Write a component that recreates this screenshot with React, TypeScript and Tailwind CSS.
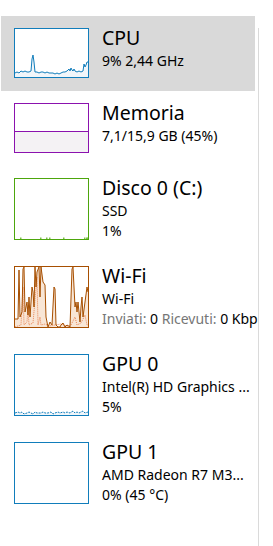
import type { ReactNode } from 'react';

type Row = {
  title: string;
  lines: ReactNode[];
  color: string;
  tall: boolean;
  graph: ReactNode;
  selected?: boolean;
};

const cpuPts =
  '0,44 2,43 4,44 6,42 8,43 10,42 12,43 14,43 16,42 17,30 18,26 19,33 20,43 22,43 24,44 26,43 28,43 30,44 32,43 34,44 36,44 38,44 40,45 42,44 44,45 46,44 48,43 50,43 52,42 54,40 55,42 56,39 57,41 58,42 59,40 60,42 62,43 64,42 66,43 68,42 69,35 70,38 71,36 72,33 73,33';

const wifiPts =
  '0,52 3,52 4,3 5,50 7,45 8,2 9,0 10,45 12,35 13,48 14,30 15,50 17,20 18,25 19,40 20,0 21,20 22,5 24,0 25,30 26,0 28,15 30,18 31,50 33,60 35,55 37,58 39,20 40,22 41,58 43,60 45,60 46,58 48,56 50,60 52,58 55,60 57,2 58,0 59,20 60,40 61,35 62,45 63,35 65,55 66,40 67,30 68,50 70,35 72,20 73,25';

const wifiDots =
  '0,60 6,58 8,20 9,58 12,55 13,40 14,58 18,56 22,10 23,58 25,50 26,58 30,57 34,59 40,58 46,57 52,59 56,58 60,50 62,58 66,56 70,48 72,58 73,58';

function CpuGraph() {
  return (
    <svg viewBox="0 0 73 48" preserveAspectRatio="none" className="h-full w-full">
      <polygon points={`0,48 ${cpuPts} 73,48`} fill="#f1f6fa" />
      <polyline points={cpuPts} fill="none" stroke="#117dbb" strokeWidth="1" />
    </svg>
  );
}

function MemGraph() {
  return (
    <div className="flex h-full w-full flex-col">
      <div className="flex-1" />
      <div className="h-[21px] border-t border-[#8b12ae] bg-[#f4f2f4]" />
    </div>
  );
}

function DiskGraph() {
  const xs = [6, 26, 32, 35, 49, 70, 72, 73];
  return (
    <svg viewBox="0 0 73 60" preserveAspectRatio="none" className="h-full w-full">
      {xs.map((x) => (
        <rect key={x} x={x - 1} y={58.5} width={1.5} height={1.5} fill="#7cc04a" />
      ))}
    </svg>
  );
}

function WifiGraph() {
  return (
    <svg viewBox="0 0 73 60" preserveAspectRatio="none" className="h-full w-full">
      <polygon points={`0,60 ${wifiPts} 73,60`} fill="#f8e6d6" />
      <polyline points={wifiDots} fill="none" stroke="#e36c33" strokeWidth="0.8" strokeDasharray="1 1" />
      <polyline points={wifiPts} fill="none" stroke="#a74f01" strokeWidth="1" />
    </svg>
  );
}

function GpuGraph({ noise }: { noise: boolean }) {
  if (!noise) return null;
  const pts =
    '0,58 3,57 5,58 7,57 9,59 12,58 14,57 16,58 18,59 20,57 22,58 26,58 28,57 30,58 33,58 36,57 38,59 40,58 43,57 45,58 48,57 50,58 52,57 55,58 58,56 60,58 62,57 64,58 66,57 68,56 70,58 73,57';
  return (
    <svg viewBox="0 0 73 60" preserveAspectRatio="none" className="h-full w-full">
      <polygon points={`0,60 ${pts} 73,60`} fill="#f1f6fa" />
      <polyline points={pts} fill="none" stroke="#117dbb" strokeWidth="1" strokeDasharray="2 1" />
    </svg>
  );
}

const rows: Row[] = [
  {
    title: 'CPU',
    lines: ['9% 2,44 GHz'],
    color: 'border-[#117dbb]',
    tall: false,
    graph: <CpuGraph />,
    selected: true,
  },
  {
    title: 'Memoria',
    lines: ['7,1/15,9 GB (45%)'],
    color: 'border-[#8b12ae]',
    tall: false,
    graph: <MemGraph />,
  },
  {
    title: 'Disco 0 (C:)',
    lines: ['SSD', '1%'],
    color: 'border-[#4da60c]',
    tall: true,
    graph: <DiskGraph />,
  },
  {
    title: 'Wi-Fi',
    lines: [
      'Wi-Fi',
      <>
        <span className="text-[#767676]">Inviati: </span>0{' '}
        <span className="text-[#767676]">Ricevuti: </span>0 Kbps
      </>,
    ],
    color: 'border-[#a74f01]',
    tall: true,
    graph: <WifiGraph />,
  },
  {
    title: 'GPU 0',
    lines: ['Intel(R) HD Graphics ...', '5%'],
    color: 'border-[#117dbb]',
    tall: true,
    graph: <GpuGraph noise />,
  },
  {
    title: 'GPU 1',
    lines: ['AMD Radeon R7 M3...', '0% (45 °C)'],
    color: 'border-[#117dbb]',
    tall: true,
    graph: <GpuGraph noise={false} />,
  },
];

export default function App() {
  return (
    <div className="flex h-[546px] w-[273px] bg-white font-['Noto_Sans',sans-serif] text-black">
      <div className="w-[258px] overflow-hidden pt-4">
        {rows.map((r) => (
          <div
            key={r.title}
            className={`ml-px flex w-[254px] gap-[13px] pb-[13px] pl-[13px] pt-3 ${r.selected ? 'bg-[#d9d9d9]' : ''}`}
          >
            <div className={`w-[75px] shrink-0 border bg-white ${r.color} ${r.tall ? 'h-[62px]' : 'h-[50px]'}`}>
              {r.graph}
            </div>
            <div className="whitespace-nowrap">
              <div className="text-[19.5px] leading-[20px]">{r.title}</div>
              <div className="mt-[3px] text-[14px] leading-[20px] text-black">
                {r.lines.map((l, i) => (
                  <div key={i}>{l}</div>
                ))}
              </div>
            </div>
          </div>
        ))}
      </div>
      <div className="mt-[28px] h-[518px] w-px bg-[#dadada]" />
    </div>
  );
}
